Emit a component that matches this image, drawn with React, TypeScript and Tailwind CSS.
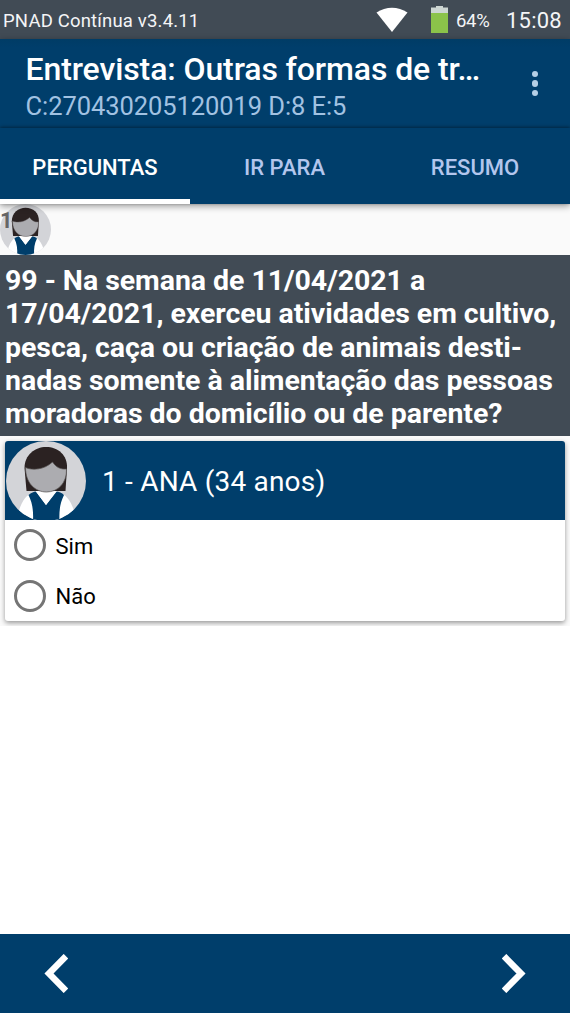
function Avatar({ className }: { className: string }) {
  return (
    <svg viewBox="0 0 80 80" className={className}>
      <defs>
        <clipPath id="avatar-circle">
          <circle cx="40" cy="40" r="40" />
        </clipPath>
      </defs>
      <g clipPath="url(#avatar-circle)">
        <rect width="80" height="80" fill="#d3d4d8" />
        <path d="M20.500 50 L18.500 27 C18.500 14 29 6 40 6 C52 6 61.500 14 61 27 L59.500 50 Z" fill="#2b2222" />
        <path d="M10 80 C13 68 17 53 29 51 L51 51 C63 53 67 65 71 80 Z" fill="#ffffff" />
        <path d="M22.500 54 C25 52 28 50.500 30 50.500 L40 64 L50 50.500 C53 50.500 56 52 58 54 C54 62 53 70 53.500 80 L27 80 C27.500 70 26.500 62 22.500 54 Z" fill="#003e6b" />
        <path d="M29.500 50 H51 L40 64 Z" fill="#ffffff" />
        <path d="M19.500 26.500 C26 29.500 38 29 46.500 21 C50 26 54 28.500 60.500 28 C61 42 52 51 40.500 51 C29 51 19.500 42 19.500 26.500 Z" fill="#acacb0" stroke="#55504f" strokeWidth="0.7" />
      </g>
    </svg>
  );
}

function StatusBar() {
  return (
    <div className="flex h-[39px] items-center bg-[#414b55] text-[#f4f5f7]">
      <span className="ml-[3px] mt-[3px] w-[373px] whitespace-nowrap text-[18.5px] leading-none tracking-[0.180px]">PNAD Contínua v3.4.11</span>
      <svg viewBox="0 0 32 25" className="h-[25px] w-[32px] shrink-0" fill="white">
        <path d="M0.500 5.500 C10 -1 22 -1 31.500 5.500 L16 25 Z" />
      </svg>
      <svg viewBox="0 0 17 27" className="ml-[23px] h-[27px] w-[17px] shrink-0">
        <path d="M5 0 H12 V1.500 H17 V7 H0 V1.500 H5 Z" fill="#cdd6d3" />
        <path d="M0 7 H17 V27 H0 Z" fill="#8bc34a" />
      </svg>
      <span className="ml-[8px] mt-[3px] w-[50px] text-[18.5px] leading-none tracking-[-0.300px]">64%</span>
      <span className="mt-[3px] text-[22px] leading-none tracking-[0.200px]">15:08</span>
    </div>
  );
}

function Option({ label }: { label: string }) {
  return (
    <label className="flex h-[50.5px] items-center pl-[9px] text-[22px] text-black">
      <span className="mr-[9.5px] size-8 rounded-full border-[3px] border-[#757575]" />
      <span className="pt-[2px]">{label}</span>
    </label>
  );
}

export default function App() {
  return (
    <div className="flex h-[1013px] w-[570px] flex-col overflow-hidden bg-white font-['Roboto',sans-serif]">
      <StatusBar />
      <header className="relative z-10 bg-[#003e6b] shadow-[0_2px_7px_rgba(0,0,0,0.4)]">
        <div className="flex h-[89px] items-center bg-linear-to-b from-[#003c66] via-[#003e6b] via-10% to-[#003e6b]">
          <div className="ml-[25.5px] w-[504.5px] pt-[7px] whitespace-nowrap">
            <h1 className="text-[32px] leading-[38px] font-medium tracking-[-0.110px] text-white">Entrevista: Outras formas de tr…</h1>
            <p className="text-[25.5px] leading-[37px] tracking-[-0.070px] text-[#a2c2e2]">C:270430205120019 D:8 E:5</p>
          </div>
          <div className="flex w-[10px] flex-col items-center gap-[3px]">
            <span className="size-[6.500px] rounded-full bg-[#b5cfe6]" />
            <span className="size-[6.500px] rounded-full bg-[#b5cfe6]" />
            <span className="size-[6.500px] rounded-full bg-[#b5cfe6]" />
          </div>
        </div>
        <nav className="grid h-[76px] grid-cols-3 bg-[#003e6b] text-center text-[22px] font-medium text-[#b3c6ed] shadow-[0_-1px_3px_rgba(0,0,0,0.4)]">
          <span className="h-[76px] border-b-[5px] border-white leading-[79px] text-white">PERGUNTAS</span>
          <span className="h-[76px] pr-px leading-[79px]">IR PARA</span>
          <span className="h-[76px] leading-[79px]">RESUMO</span>
        </nav>
      </header>
      <div className="relative h-[51px] bg-[#fafafa]">
        <Avatar className="size-[51px]" />
        <span className="absolute top-[4px] left-0 text-[22px] leading-[26px] font-bold text-[#666666]">1</span>
      </div>
      <div className="h-[181px] bg-[#414b55] pt-[9px] pl-[5px] text-[28.5px] leading-[33.300px] font-bold tracking-[-0.050px] whitespace-nowrap text-white">
        <p>99 - Na semana de 11/04/2021 a</p>
        <p>17/04/2021, exerceu atividades em cultivo,</p>
        <p>pesca, caça ou criação de animais desti-</p>
        <p>nadas somente à alimentação das pessoas</p>
        <p>moradoras do domicílio ou de parente?</p>
      </div>
      <main className="h-[190px] overflow-hidden bg-[#fafafa] px-[5px] pt-[5px]">
        <section className="h-[180px] overflow-hidden rounded-[3px] bg-white shadow-[0_2px_5px_rgba(0,0,0,0.4)]">
          <div className="flex h-[79px] items-center overflow-hidden bg-[#003e6b] pl-px">
            <Avatar className="size-[80px]" />
            <h2 className="ml-[16px] mt-[2px] text-[28px] tracking-[0.200px] whitespace-nowrap text-white">1 - ANA (34 anos)</h2>
          </div>
          <Option label="Sim" />
          <Option label="Não" />
        </section>
      </main>
      <footer className="mt-auto flex h-[79px] items-start justify-between bg-[#003e6b] px-[44px] pt-[20px]">
        <button aria-label="Anterior">
          <svg viewBox="0 0 24 39" className="h-[39px] w-[24px]" fill="none" stroke="white" strokeWidth="6.500">
            <path d="M22 2.200 L5 19.500 L22 36.800" />
          </svg>
        </button>
        <button aria-label="Próxima">
          <svg viewBox="0 0 24 39" className="h-[39px] w-[24px]" fill="none" stroke="white" strokeWidth="6.500">
            <path d="M2 2.200 L19 19.500 L2 36.800" />
          </svg>
        </button>
      </footer>
    </div>
  );
}
